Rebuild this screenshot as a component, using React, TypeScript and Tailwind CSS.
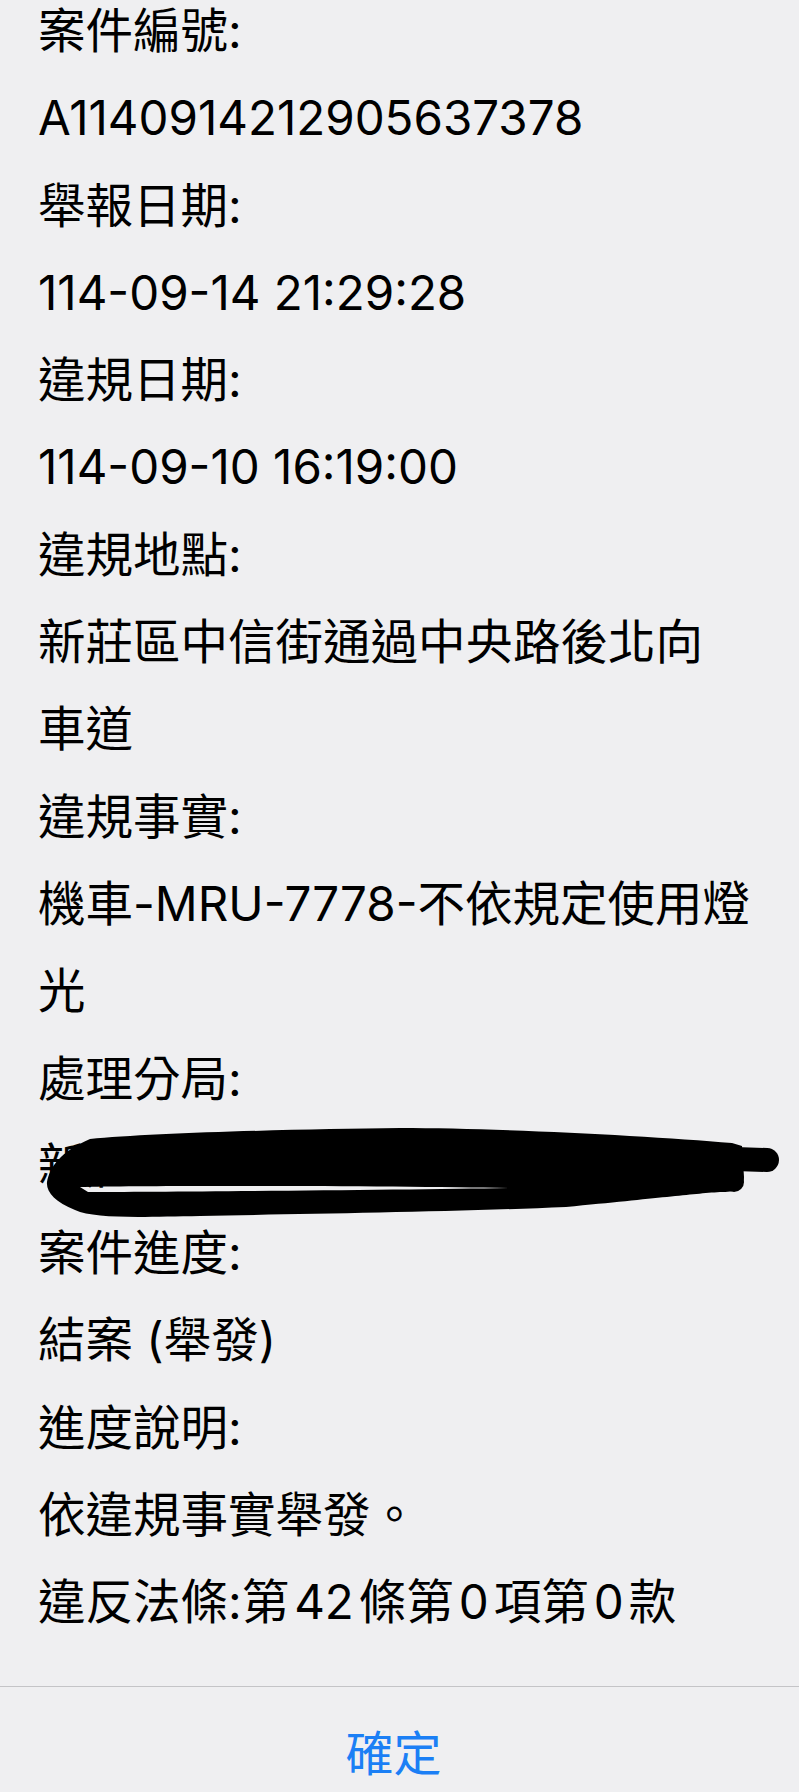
const FONT = { fontFamily: '"Inter", "Noto Sans CJK TC", sans-serif' }

type Line = string | "redacted" | "law"

const lines: Line[] = [
  "案件編號:",
  "A114091421290563737 8".replace(" ", ""),
  "舉報日期:",
  "114-09-14 21:29:28",
  "違規日期:",
  "114-09-10 16:19:00",
  "違規地點:",
  "新莊區中信街通過中央路後北向",
  "車道",
  "違規事實:",
  "機車-MRU-7778-不依規定使用燈",
  "光",
  "處理分局:",
  "redacted",
  "案件進度:",
  "結案 (舉發)",
  "進度說明:",
  "依違規事實舉發。",
  "law",
]

// hand-drawn marker stroke hiding the police branch name
function Scribble() {
  return (
    <svg
      className="pointer-events-none absolute -left-[38px] top-0 h-[110px] w-[799px]"
      viewBox="0 0 799 110"
    >
      <path
        fillRule="evenodd"
        fill="#000"
        d="M47 60 C50 45 60 30 90 17 C150 11 300 7 400 6 C500 6 650 14 732 21 L742 24 L744 55 C744 68 735 70 720 70 C690 72 660 76 566 85 C450 90 300 92 200 94 C140 95 95 97 75 88 C55 80 46 70 47 60 Z M80 65 C150 63 400 64 509 66 C400 68 150 70 88 70 Z"
      />
      <path d="M735 37 L767 38" stroke="#000" strokeWidth={24} strokeLinecap="round" />
      <circle cx={734} cy={60} r={10} fill="#000" />
    </svg>
  )
}

function Row({ children, className = "" }: { children: React.ReactNode; className?: string }) {
  return (
    <div className={`h-[87.3px] whitespace-nowrap text-[47.5px] leading-[87.3px] ${className}`}>
      {children}
    </div>
  )
}

export default function App() {
  return (
    <div className="min-h-[1792px] w-[799px] overflow-hidden bg-[#efeff1] text-black" style={FONT}>
      <div className="-mt-[13px] pl-[38px]">
        {lines.map((line, i) => {
          if (line === "redacted")
            return (
              <Row key={i} className="relative">
                新莊
                <Scribble />
              </Row>
            )
          if (line === "law")
            return (
              <Row key={i}>
                違反法條:第<span className="mx-[5px]">42</span>條第<span className="mx-[5px]">0</span>項第
                <span className="mx-[5px]">0</span>款
              </Row>
            )
          return <Row key={i}>{line}</Row>
        })}
      </div>
      <div className="mt-[40px] h-px bg-[#c4c4c7]" />
      <div className="flex h-[105px] justify-center pr-[12px] pt-[43px]">
        <span className="text-[48px] leading-[48px] text-[#1b7ff5]">確定</span>
      </div>
    </div>
  )
}
